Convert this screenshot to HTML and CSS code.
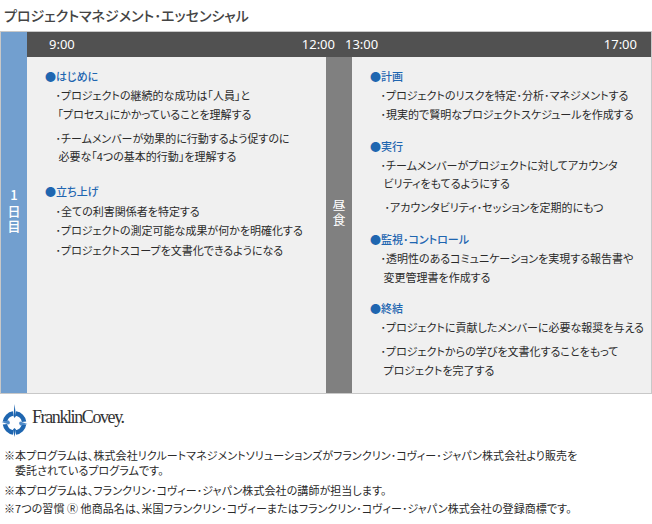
FILE: index.html
```html
<!DOCTYPE html>
<html lang="ja">
<head>
<meta charset="utf-8">
<title>プロジェクトマネジメント・エッセンシャル</title>
<link rel="stylesheet" href="styles.css">
</head>
<body>
<h1 class="title">プロジェクトマネジメント･エッセンシャル</h1>
<div class="table">
  <div class="day"><span class="vtext">1日目</span></div>
  <div class="main">
    <div class="times">
      <div class="tleft"><span>9:00</span><span>12:00</span></div>
      <div class="tright"><span>13:00</span><span>17:00</span></div>
    </div>
    <div class="body">
      <div class="panel pleft">
        <h2>●はじめに</h2>
        <p>･プロジェクトの継続的な成功は「人員」と<br><span class="ind2">「プロセス」にかかっていることを理解する</span></p>
        <p class="gap">･チームメンバーが効果的に行動するよう促すのに<br><span class="ind">必要な「4つの基本的行動」を理解する</span></p>
        <h2 class="sec1">●立ち上げ</h2>
        <p class="wide">･全ての利害関係者を特定する</p>
        <p class="wide">･プロジェクトの測定可能な成果が何かを明確化する</p>
        <p class="wide">･プロジェクトスコープを文書化できるようになる</p>
      </div>
      <div class="lunch"><span class="vtext">昼食</span></div>
      <div class="panel pright">
        <h2>●計画</h2>
        <p>･プロジェクトのリスクを特定･分析･マネジメントする</p>
        <p class="near">･現実的で賢明なプロジェクトスケジュールを作成する</p>
        <h2 class="sec2">●実行</h2>
        <p>･チームメンバーがプロジェクトに対してアカウンタ<br><span class="ind">ビリティをもてるようにする</span></p>
        <p class="gap ind3">･アカウンタビリティ･セッションを定期的にもつ</p>
        <h2 class="sec2">●監視･コントロール</h2>
        <p>･透明性のあるコミュニケーションを実現する報告書や<br><span class="ind">変更管理書を作成する</span></p>
        <h2 class="sec2">●終結</h2>
        <p>･プロジェクトに貢献したメンバーに必要な報奨を与える</p>
        <p class="gap">･プロジェクトからの学びを文書化することをもって<br><span class="ind">プロジェクトを完了する</span></p>
      </div>
    </div>
  </div>
</div>
<div class="logo">
  <svg class="mark" width="28" height="34" viewBox="0 0 28 34" aria-hidden="true">
    <g fill="none" stroke="#1f66b0" stroke-width="4.500">
      <path d="M14.800 9.600 A9.500 9.500 0 0 1 23 17.800"/>
      <path d="M23 20.200 A9.500 9.500 0 0 1 14.800 28.400"/>
      <path d="M12.200 28.400 A9.500 9.500 0 0 1 4 20.200"/>
      <path d="M4 17.800 A9.500 9.500 0 0 1 12.200 9.600"/>
    </g>
    <g fill="#1f66b0">
      <path d="M13.500 0 L15 12 L13.500 14 L12.500 12 Z"/>
      <path d="M13.500 33 L12 25.500 L13.500 24 L15 25.500 Z"/>
    </g>
    <g fill="#4f8ac8">
      <path d="M0.500 18 L8 16.500 L9 19 L8 20.500 Z"/>
      <path d="M26.500 20 L19 21.500 L18 19 L19 17.500 Z"/>
    </g>
  </svg>
  <span class="brand">FranklinCovey.</span>
</div>
<div class="notes">
  <p>※本プログラムは、株式会社リクルートマネジメントソリューションズがフランクリン･コヴィー･ジャパン株式会社より販売を<br><span class="nind">委託されているプログラムです。</span></p>
  <p class="n2">※本プログラムは、フランクリン･コヴィー･ジャパン株式会社の講師が担当します。</p>
  <p class="n3">※7つの習慣 <span class="reg">Ⓡ</span> 他商品名は、米国フランクリン･コヴィーまたはフランクリン･コヴィー･ジャパン株式会社の登録商標です。</p>
</div>
</body>
</html>
```
FILE: styles.css
```css
* { box-sizing: border-box; margin: 0; padding: 0; }
html, body { background: #fff; }
body {
  width: 652px;
  height: 524px;
  overflow: hidden;
  font-family: "Noto Sans CJK JP", "Noto Sans", sans-serif;
  font-feature-settings: "palt";
  color: #333;
}
.title {
  font-size: 14px;
  font-weight: 500;
  line-height: 18px;
  padding: 6px 0 7px 4px;
  color: #444;
  height: 31px;
}
.table {
  display: flex;
  width: 652px;
  height: 363px;
  border: 1px solid #c8c8c8;
}
.vtext {
  writing-mode: vertical-rl;
  text-orientation: upright;
  font-feature-settings: normal;
  line-height: 1;
}
.day {
  width: 26px;
  background: #729fcf;
  color: #fff;
  font-size: 13px;
  font-weight: 500;
  letter-spacing: 2.500px;
  display: flex;
  align-items: center;
  justify-content: center;
}
.main { flex: 1; display: flex; flex-direction: column; }
.times {
  height: 25px;
  background: #515151;
  color: #fff;
  font-family: "Noto Sans", sans-serif;
  font-size: 13px;
  line-height: 25px;
  display: flex;
}
.tleft {
  width: 308px;
  padding-left: 22px;
  display: flex;
  justify-content: space-between;
}
.tright {
  flex: 1;
  padding: 0 14px 0 10px;
  display: flex;
  justify-content: space-between;
}
.body { flex: 1; display: flex; }
.panel {
  background: #f0f0f0;
  font-size: 11px;
  line-height: 18.500px;
  padding-top: 10px;
}
.pleft { width: 299px; padding-left: 18px; }
.pright { flex: 1; padding-left: 18px; }
.lunch {
  width: 26px;
  background: #808080;
  color: #fff;
  font-size: 13px;
  letter-spacing: 1px;
  display: flex;
  align-items: center;
  justify-content: center;
  padding-bottom: 24px;
}
h2 {
  font-size: 11px;
  font-weight: 500;
  color: #1f66b0;
  line-height: 19px;
}
.panel p { padding-left: 10.500px; color: #2a2a2a; }
.ind { padding-left: 3px; }
.ind2 { margin-left: 2px; }
.panel .ind3 { padding-left: 14.500px; }
.gap { margin-top: 5.500px; }
.near { margin-top: 0.500px; }
.wide { margin-top: 1px; }
.sec1 { margin-top: 16px; }
.sec2 { margin-top: 13.250px; }
.logo {
  display: flex;
  align-items: flex-start;
  gap: 3px;
  height: 42px;
  padding: 10px 0 0 1px;
}
.brand {
  font-family: "Liberation Serif", serif;
  font-size: 18px;
  line-height: 26px;
  letter-spacing: -1.400px;
  color: #333;
}
.notes {
  font-size: 11px;
  line-height: 15px;
  letter-spacing: 0.070px;
  padding: 12px 0 0 4px;
  color: #2a2a2a;
}
.nind { padding-left: 11px; }
.n2 { margin-top: 5px; }
.n3 { margin-top: 3px; }
.reg { font-size: 11px; }
```
